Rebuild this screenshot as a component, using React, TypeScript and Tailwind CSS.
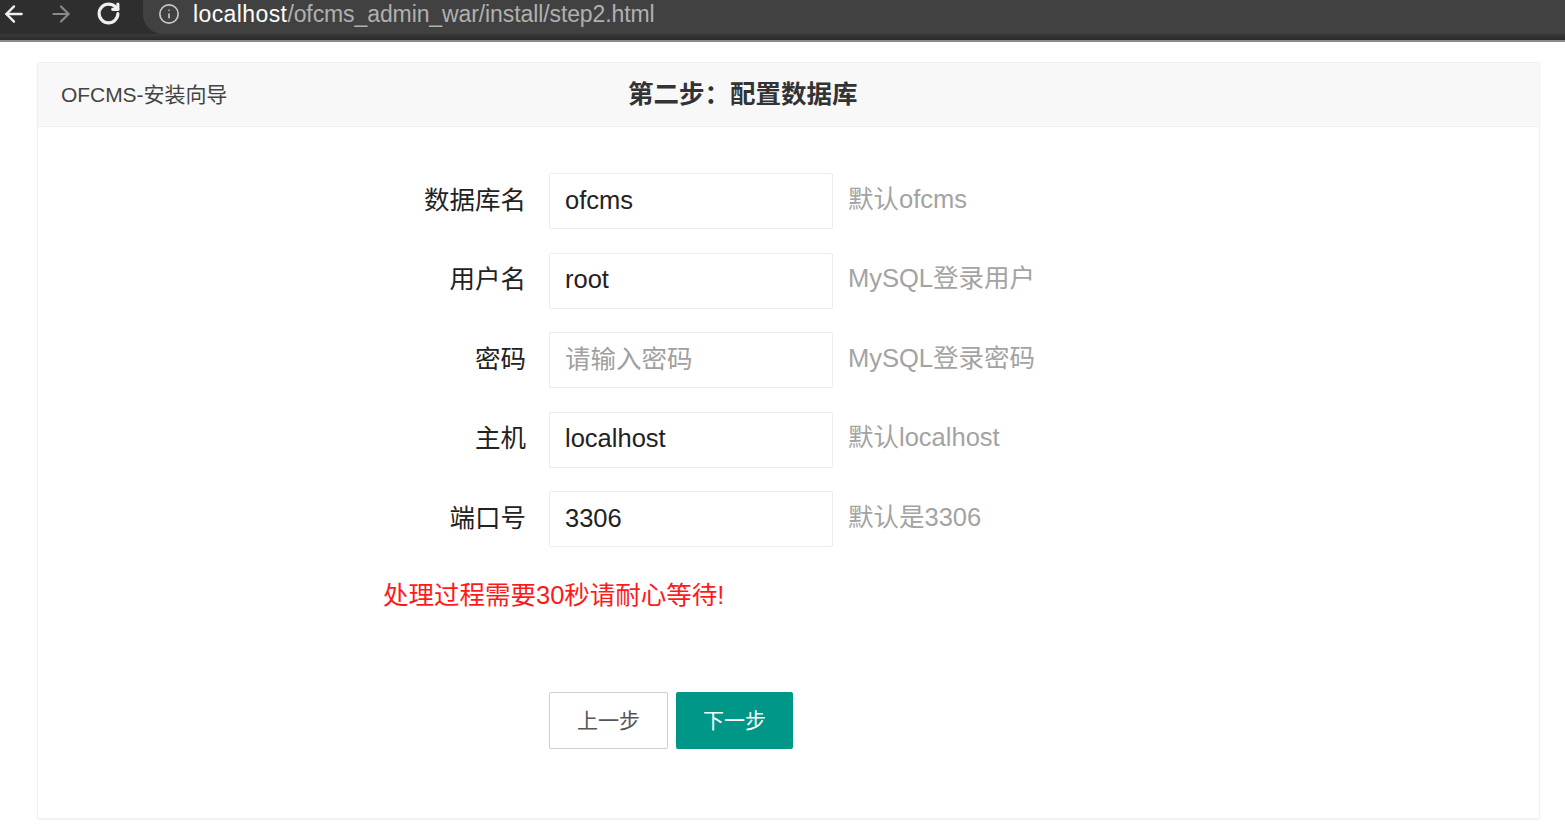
import { ArrowLeft, ArrowRight, RotateCw, Info } from "lucide-react";

const fields = [
  { label: "数据库名", value: "ofcms", hint: "默认ofcms" },
  { label: "用户名", value: "root", hint: "MySQL登录用户" },
  { label: "密码", value: "", placeholder: "请输入密码", hint: "MySQL登录密码" },
  { label: "主机", value: "localhost", hint: "默认localhost" },
  { label: "端口号", value: "3306", hint: "默认是3306" },
];

const font = "font-['Liberation_Sans','Noto_Sans_CJK_SC',sans-serif]";

export default function App() {
  return (
    <div className={`h-[829px] w-[1565px] overflow-hidden bg-white ${font}`}>
      {/* Browser toolbar */}
      <div className="flex h-[42px] flex-col border-b-2 border-[#8c8c8c] bg-[#2e2e2e]">
        <div className="flex h-[34px] items-center">
          <div className="flex w-[143px] shrink-0 items-center pb-[7px]">
            <ArrowLeft className="ml-[1px] h-[26px] w-[26px] text-[#f0f0f0]" strokeWidth={2.2} />
            <ArrowRight className="ml-[21px] h-[26px] w-[26px] text-[#8a8a8a]" strokeWidth={2} />
            <RotateCw className="ml-[22px] h-[25px] w-[25px] text-[#efefef]" strokeWidth={3} />
          </div>
          <div className="flex h-[34px] flex-1 items-center rounded-bl-[20px] bg-[#414141] pb-[6px] pl-[15px]">
            <Info className="h-[22px] w-[22px] text-[#c8c8c8]" strokeWidth={1.8} />
            <span className="ml-[13px] text-[23px] tracking-[-0.1px] text-[#b0b0b0]">
              <span className="tracking-[0.4px] text-white">localhost</span>/ofcms_admin_war/install/step2.html
            </span>
          </div>
        </div>
        <div className="h-[6px] bg-gradient-to-b from-[#3a3a3a] to-[#2a2a2a]" />
      </div>

      {/* Card */}
      <div className="ml-[37px] mt-[20px] h-[757px] w-[1503px] rounded-[2px] border border-[#f0f0f0] shadow-[0_1px_2px_rgba(0,0,0,0.05)]">
        <div className="relative flex h-[64px] items-center border-b border-[#efefef] bg-[#f8f8f8] pl-[23px]">
          <span className="text-[21px] text-[#444444] tracking-[-0.05px]">OFCMS-安装向导</span>
          <span className="absolute left-[590px] top-[12px] text-[25.5px] font-bold text-[#333333]">第二步：配置数据库</span>
        </div>

        <div className="pt-[46px]">
          <div className="flex flex-col gap-[23.5px]">
            {fields.map((f) => (
              <div key={f.label} className="flex h-[56px] items-center">
                <label className="w-[488px] -translate-y-[1px] text-right text-[25.5px] text-[#222222]">{f.label}</label>
                <input
                  readOnly
                  value={f.value}
                  placeholder={f.placeholder}
                  className="ml-[23px] h-[56px] w-[284px] rounded-[2px] border border-[#ececec] bg-white pb-[2px] pl-[15px] text-[25.5px] text-[#222222] outline-none placeholder:text-[#a0a0a0]"
                />
                <span className="ml-[15px] -translate-y-[2px] text-[25.5px] text-[#a3a3a3]">{f.hint}</span>
              </div>
            ))}
          </div>

          <div className="mt-[28px] pl-[345px] text-[25.5px] leading-[40px] text-[#ff1a1a]">处理过程需要30秒请耐心等待!</div>

          <div className="mt-[77px] flex gap-[8px] pl-[511px]">
            <button className="h-[57px] w-[119px] rounded-[2px] border border-[#cfcfcf] bg-white text-[21px] text-[#555555]">上一步</button>
            <button className="h-[57px] w-[117px] rounded-[2px] bg-[#009688] text-[21px] text-white">下一步</button>
          </div>
        </div>
      </div>
    </div>
  );
}
